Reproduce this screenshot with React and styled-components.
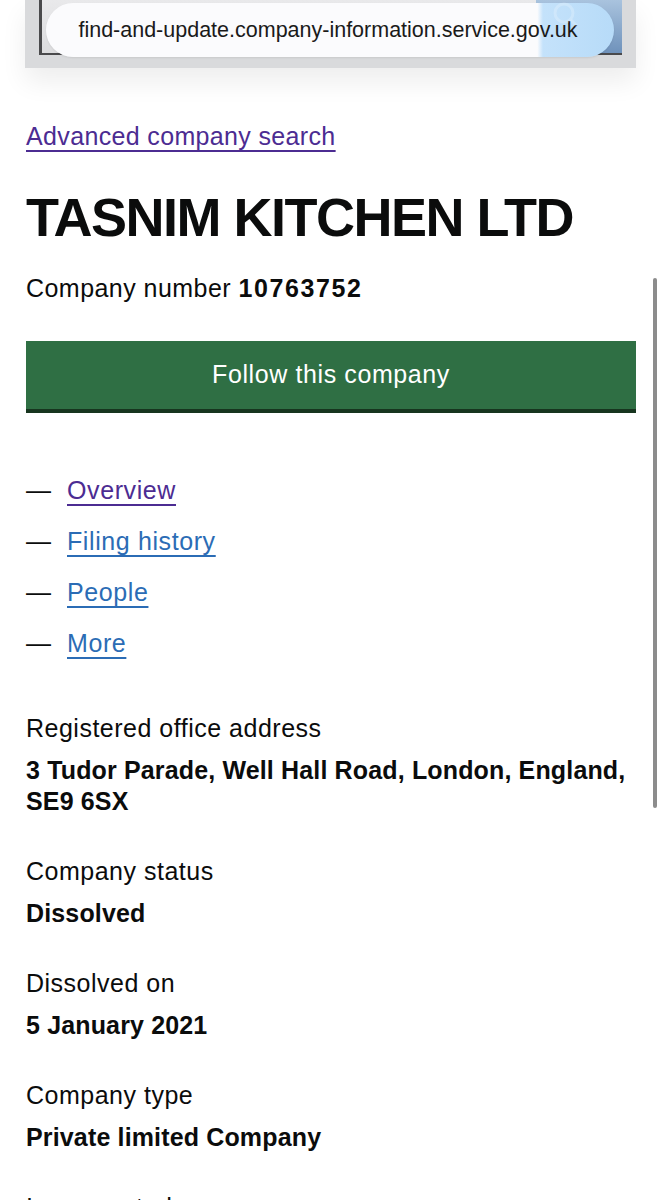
import styled, { createGlobalStyle } from "styled-components";

const GlobalStyle = createGlobalStyle`
  html, body {
    margin: 0;
    padding: 0;
    background: #ffffff;
  }
  body {
    font-family: "Liberation Sans", Arial, sans-serif;
    color: #0b0c0c;
  }
`;

const Page = styled.div`
  position: relative;
  width: 662px;
  height: 1200px;
  overflow: hidden;
  background: #ffffff;
`;

/* captured browser address bar at the top */
const BarShell = styled.div`
  margin: 0 26px 0 25px;
  height: 68px;
  background: #d9dadc;
  box-shadow: 0 14px 26px rgba(0, 0, 0, 0.07);
  display: grid;
  padding: 0 14px 0 14px;
  box-sizing: border-box;
`;

const BarFrame = styled.div`
  grid-area: 1 / 1;
  height: 55px;
  box-sizing: border-box;
  border-left: 3px solid #4a4a4c;
  border-bottom: 2px solid #4a4a4c;
  display: grid;
  grid-template-columns: 1fr 86px;
  background: linear-gradient(#e9e9eb, #dcdcde);
`;

const FrameBlue = styled.div`
  background: linear-gradient(180deg, #a9c3de 0%, #6f92bb 100%);
`;

const UrlPill = styled.div`
  grid-area: 1 / 1;
  margin: 3px 8px 0 7px;
  height: 54px;
  border-radius: 27px;
  background: linear-gradient(90deg, #fbfbfd 0%, #fbfbfd 86.5%, #c4e2fb 87.5%, #b7dbf8 100%);
  box-shadow: 0 1px 2px rgba(0, 0, 0, 0.08);
  display: flex;
  align-items: center;
  justify-content: center;
  position: relative;
  font-family: "Liberation Sans", Arial, sans-serif;
  font-size: 21.5px;
  color: #1a1a1a;
  padding-right: 4px;
`;

const Glint = styled.svg`
  position: absolute;
  right: 28px;
  top: -6px;
`;

const Main = styled.main`
  padding: 53px 26px 0 26px;
  font-size: 25px;
  line-height: 31px;
  letter-spacing: 0.45px;
`;

const BackLink = styled.a`
  display: inline-block;
  color: #4c2c92;
  text-decoration: underline;
  text-decoration-thickness: 1.5px;
  text-underline-offset: 5px;
  letter-spacing: 0.35px;
`;

const Heading = styled.h1`
  margin: 36px 0 0 0;
  font-size: 54px;
  line-height: 59px;
  font-weight: 700;
  letter-spacing: -1.5px;
`;

const CompanyNumber = styled.p`
  margin: 26px 0 0 0;

  strong {
    font-weight: 700;
    letter-spacing: 1.6px;
  }
`;

const FollowButton = styled.button`
  display: block;
  width: 100%;
  margin-top: 37px;
  height: 72px;
  border: none;
  border-bottom: 4px solid #17351f;
  background: #2f6f44;
  color: #ffffff;
  font-family: "Liberation Sans", Arial, sans-serif;
  font-size: 25px;
  letter-spacing: 0.6px;
  padding: 0 0 2px 0;
  cursor: pointer;
`;

const NavList = styled.ul`
  list-style: none;
  margin: 62px 0 0 0;
  padding: 0;
  display: flex;
  flex-direction: column;
  gap: 20px;
`;

const NavItem = styled.li`
  display: flex;
  align-items: baseline;
`;

const Dash = styled.span`
  width: 41px;
  flex: none;
  letter-spacing: 0;
`;

const NavLink = styled.a`
  color: ${(p) => (p.$visited ? "#4c2c92" : "#2b6cb5")};
  text-decoration: underline;
  text-decoration-thickness: 1.5px;
  text-underline-offset: 5px;
  letter-spacing: 0.6px;
`;

const Details = styled.dl`
  margin: 54px 0 0 0;
`;

const Label = styled.dt`
  margin: 0;
  letter-spacing: 0.5px;
`;

const Value = styled.dd`
  margin: 11px 0 39px 0;
  font-weight: 700;
  letter-spacing: 0.15px;
`;

const Scrollbar = styled.div`
  position: absolute;
  right: 5px;
  top: 278px;
  width: 4px;
  height: 530px;
  border-radius: 2px;
  background: #8c8c8c;
`;

const navItems = [
  { label: "Overview", visited: true },
  { label: "Filing history" },
  { label: "People" },
  { label: "More" },
];

const details = [
  {
    label: "Registered office address",
    value: "3 Tudor Parade, Well Hall Road, London, England, SE9 6SX",
  },
  { label: "Company status", value: "Dissolved" },
  { label: "Dissolved on", value: "5 January 2021" },
  { label: "Company type", value: "Private limited Company" },
  { label: "Incorporated on", value: "" },
];

export default function App() {
  return (
    <Page>
      <GlobalStyle />
      <BarShell>
        <BarFrame>
          <div />
          <FrameBlue />
        </BarFrame>
        <UrlPill>
          find-and-update.company-information.service.gov.uk
          <Glint width="40" height="40" viewBox="0 0 40 40">
            <circle cx="18" cy="16" r="9" fill="none" stroke="rgba(255,255,255,0.22)" strokeWidth="3" />
            <line x1="25" y1="23" x2="31" y2="29" stroke="rgba(255,255,255,0.22)" strokeWidth="3" />
          </Glint>
        </UrlPill>
      </BarShell>

      <Main>
        <BackLink href="#">Advanced company search</BackLink>
        <Heading>TASNIM KITCHEN LTD</Heading>
        <CompanyNumber>
          Company number <strong>10763752</strong>
        </CompanyNumber>
        <FollowButton>Follow this company</FollowButton>

        <NavList>
          {navItems.map((item) => (
            <NavItem key={item.label}>
              <Dash>—</Dash>
              <NavLink href="#" $visited={item.visited}>
                {item.label}
              </NavLink>
            </NavItem>
          ))}
        </NavList>

        <Details>
          {details.map((d) => (
            <div key={d.label}>
              <Label>{d.label}</Label>
              {d.value && <Value>{d.value}</Value>}
            </div>
          ))}
        </Details>
      </Main>
      <Scrollbar />
    </Page>
  );
}
